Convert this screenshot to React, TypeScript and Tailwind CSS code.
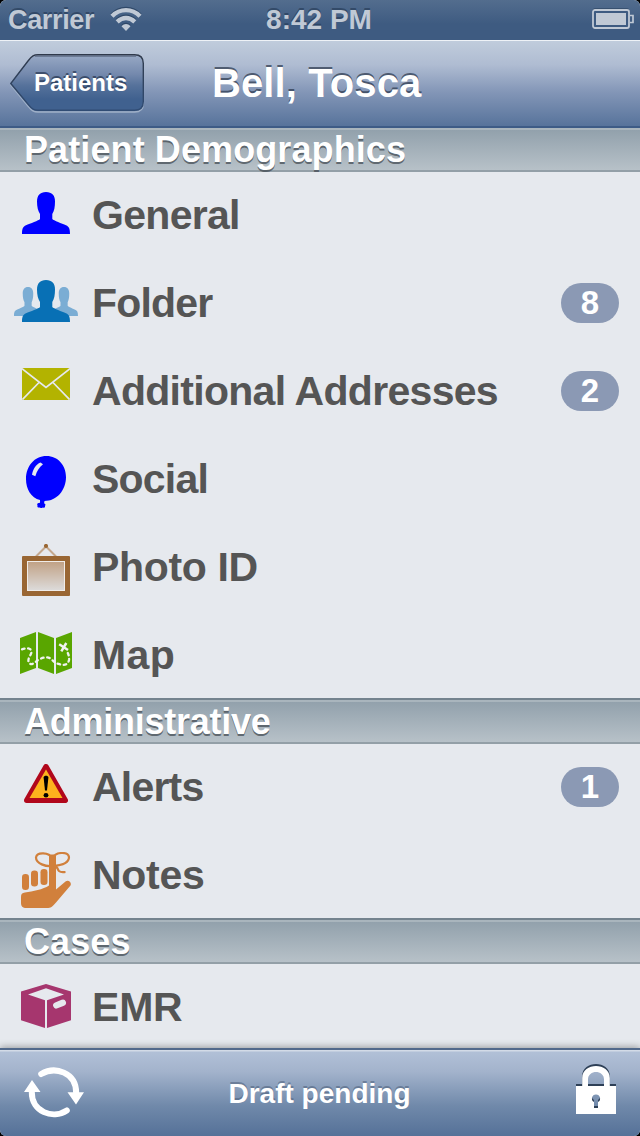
import type { ReactNode } from "react";

const person =
  "M24 0C18 0 15 3.500 15 9.500c0 5.500 1 9.500 3 12.500v5C17 28.500 8 31.500 4 33.300 1 34.700 0 36.500 0 42h48c0-5.500-1-7.300-4-8.700C40 31.500 31.500 28.500 30.300 27v-5C32.200 19 33 15 33 9.500 33 3.500 30 0 24 0z";

function GeneralIcon() {
  return (
    <svg width="48" height="42" viewBox="0 0 48 42" className="ml-[22px] mt-[20px]">
      <path d={person} fill="#0000ff" />
    </svg>
  );
}

function FolderIcon() {
  return (
    <svg width="64" height="42" viewBox="0 0 64 42" className="ml-[14px] mt-[20px]">
      <g fill="#7badd4">
        <path d={person} transform="translate(0 7) scale(.583 .69)" />
        <path d={person} transform="translate(36 7) scale(.583 .69)" />
      </g>
      <path d={person} transform="translate(8 0)" fill="#0870b5" />
    </svg>
  );
}

function MailIcon() {
  return (
    <svg width="48" height="32" viewBox="0 0 48 32" className="ml-[22px] mt-[20px]">
      <rect width="48" height="32" rx="1.500" fill="#b3b300" />
      <path d="M0 .7 24 19.500 48 .7M.5 31.500 17 14.500M47.500 31.500 31 14.500" fill="none" stroke="#e6e9ee" strokeWidth="1.700" />
    </svg>
  );
}

function BalloonIcon() {
  return (
    <svg width="40" height="52" viewBox="0 0 40 52" className="ml-[26px] mt-[20px]">
      <path
        d="M20.500 0C32 0 40 9.500 40 21c0 13-9 24-21.500 24 0 1-.7 1.800-.2 2.500 1.700 1 1.200 1.500.7 2.500.3 1.500-.7 2-2 1.500-1 .7-2.500.7-3.500 0-1.500.3-2.500-.3-2-2-1-2 .5-2.500 2-2.500.8-.5.500-2 .5-3C5 42 0 33 0 23 0 10 8.500 0 20.500 0z"
        fill="#0000ff"
      />
      <path d="M14.500 6.500 17 8.300c-4 3-6 6.700-7.700 12L6 18.800c1-5.500 3.800-10.500 8.500-12.300z" fill="#e6e9ee" />
    </svg>
  );
}

function FrameIcon() {
  return (
    <svg width="48" height="52" viewBox="0 0 48 52" className="ml-[22px] mt-[20px]">
      <defs>
        <linearGradient id="photo" x1="0" y1="0" x2="0" y2="1">
          <stop offset="0" stopColor="#c1a286" />
          <stop offset="1" stopColor="#dcdad9" />
        </linearGradient>
      </defs>
      <path d="M14 12.500 24 2.500l10 10" fill="none" stroke="#c4a88e" strokeWidth="2" />
      <circle cx="24" cy="2" r="2.100" fill="#996633" />
      <rect y="12" width="48" height="40" rx="1" fill="#996633" />
      <rect x="5" y="17" width="38" height="30" fill="#f0ece8" />
      <rect x="6" y="18" width="36" height="28" fill="url(#photo)" />
    </svg>
  );
}

function MapIcon() {
  return (
    <svg width="52" height="42" viewBox="0 0 52 42" className="ml-[20px] mt-[20px]">
      <path d="M0 6 16 0v36L0 42zM18 0l16 6v36l-16-6zM36 6l16-6v36l-16 6z" fill="#59a600" />
      <g fill="none" stroke="#f0f3f0">
        <path
          d="M2 17.300C5 16.200 8.500 15.700 10.500 17.500 13 20.500 10 23 8.900 26 7.500 30 9 32.500 12.300 32 15 31.200 17 28 21 26.500 25 24.700 29.500 25 32 27.700 34.500 31 37 31.500 40 32.300 44 33.500 48 33 49 28 49.400 25 48.500 22 47 19.500"
          strokeWidth="2.300"
          strokeDasharray="2.600 3.600"
          strokeLinecap="round"
        />
        <path d="m39.200 12.200 8.800 5.800M46.300 11l-5 8.300" strokeWidth="2.500" />
      </g>
    </svg>
  );
}

function AlertIcon() {
  return (
    <svg width="44" height="39" viewBox="0 0 44 39" className="ml-[24px] mt-[20px]">
      <path d="M22 2.700 41.300 36.300H2.700z" fill="#b1071b" stroke="#b1071b" strokeWidth="5.400" strokeLinejoin="round" />
      <path d="M22 5.500 38.500 34H5.500z" fill="#fdb31d" />
      <path d="M19.600 13.500c0-2.300 4.800-2.300 4.800 0L23 26.500h-2z" fill="#000" />
      <ellipse cx="22" cy="31.300" rx="2.400" ry="2.300" fill="#000" />
    </svg>
  );
}

function NotesIcon() {
  return (
    <svg width="50" height="56" viewBox="0 0 50 56" className="ml-[21px] mt-[20px]">
      <g fill="#d1803c">
        <rect x="1" y="22" width="7" height="16" rx="3.300" />
        <rect x="10" y="18.500" width="7" height="16" rx="3.300" />
        <rect x="19.500" y="17" width="7" height="16" rx="3.300" />
        <path d="M28 4c0-2 7-2 7 0v33.500L44.500 29.500c3-2 6.500 1 5 4L35 50.500c-4 4.500-5 5.500-9 5.500H5.500C1.500 56 0 54 0 51v-6c0-3 1-4 4-4.500 8-1.200 18-3 24-7z" />
      </g>
      <g fill="none" stroke="#d1803c" strokeWidth="2.200">
        <path d="M31.500 14C25 15 15 11.500 15 5.500 16-.5 28 .5 31.500 6 35-.5 47-.5 48 5c0 6-8.500 8.500-16.500 9" />
        <path d="M33 14.500c4-.5 3 2.500 5 4.500 2 1.800 4 1.200 6.500 1" />
      </g>
    </svg>
  );
}

function BoxIcon() {
  return (
    <svg width="50" height="44" viewBox="0 0 50 44" className="ml-[21px] mt-[20px]">
      <path d="M25 0 50 7.500v28.700L26 44V16.300L43 10.400 25 4.300 7 10.400l17 5.900V44L0 36.200V7.500z" fill="#a6366e" />
      <path d="M35.300 21.400 41.800 18.800" stroke="#e6e9ee" strokeWidth="6.400" strokeLinecap="round" />
    </svg>
  );
}

function Wifi() {
  return (
    <svg width="32" height="25" viewBox="0 0 32 25" className="ml-[16px] mt-[6px] overflow-visible">
      {[
        { dy: -1.3, c: "#2f4868" },
        { dy: 0, c: "#c0c9d5" },
      ].map(({ dy, c }) => (
        <g key={dy} transform={`translate(0 ${dy})`} fill="none" stroke={c} strokeWidth="4.300">
          <path d="M2 10.200C10 2.200 22 2.200 30 10.200" />
          <path d="M7.200 15.900c5.300-5.200 12.300-5.200 17.600 0" />
          <path d="m16 25-4.500-4.700c2.700-3 6.300-3 9 0z" fill={c} stroke="none" />
        </g>
      ))}
    </svg>
  );
}

function Battery() {
  return (
    <svg width="42" height="22" viewBox="0 0 42 22" className="mr-[6px] mt-[8px]">
      <rect x="1" y="0" width="36" height="20" rx="2" fill="#2b425f" opacity=".6" />
      <rect x="1" y="2" width="36" height="18" rx="2" fill="#3e5b81" stroke="#c0c9d5" strokeWidth="1.800" />
      <path d="M38 7.500h3v7h-3" fill="none" stroke="#c0c9d5" strokeWidth="1.700" />
      <rect x="4" y="5" width="30" height="12" fill="#c0c9d5" />
    </svg>
  );
}

function SyncIcon() {
  return (
    <svg width="60" height="51" viewBox="0 0 60 51" className="mb-[2px] ml-[24px]">
      <g fill="none" stroke="#fff" strokeWidth="6" strokeLinecap="round">
        <path d="M17.200 7C31-1 52.200 5 52.200 26" />
        <path d="M42.800 43.500C29 52.500 7.500 45 7.800 25" />
      </g>
      <path d="M43.500 25.200H60l-8 12.300zM0 25 8 13l8.500 12z" fill="#fff" />
    </svg>
  );
}

function LockIcon() {
  const shape =
    "M0 22h6.200v-8C6.200-2 33.800-2 33.800 14v8H40v28H0zM12 22h16v-6.500c0-10-16-10-16 0zM20 30.500a4 4 0 0 0-2 7.500v6h4v-6a4 4 0 0 0-2-7.500z";
  return (
    <svg width="40" height="52" viewBox="0 -2 40 52" className="mr-[24px]">
      <path d={shape} fill="#2e4057" fillRule="evenodd" transform="translate(0 -2)" />
      <path d={shape} fill="#fff" fillRule="evenodd" />
    </svg>
  );
}

function BackButton() {
  return (
    <button className="relative ml-[10px] flex h-[60px] w-[135px] items-center pl-[24px]">
      <svg width="135" height="60" viewBox="0 0 135 60" className="absolute left-0 top-0">
        <defs>
          <linearGradient id="back" x1="0" y1="0" x2="0" y2="1">
            <stop offset="0" stopColor="#98a9c5" />
            <stop offset=".35" stopColor="#7489ad" />
            <stop offset=".55" stopColor="#56729b" />
            <stop offset=".8" stopColor="#40618f" />
            <stop offset="1" stopColor="#40618f" />
          </linearGradient>
          <linearGradient id="edge" x1="0" y1="0" x2="0" y2="1">
            <stop offset="0" stopColor="#303a4b" />
            <stop offset="1" stopColor="#304c74" />
          </linearGradient>
        </defs>
        <path d="M.8 31 18 8.500C22 3 24 2.500 28 2.500h96.500c6 0 8.800 3 8.800 8.500v38.500c0 6-3 8.500-8.800 8.500H28c-4 0-6-1-10-6z" fill="none" stroke="#9fb0c8" strokeWidth="1.500" />
        <path d="M.8 29.500 18 7C22 1.800 24 .8 28 .8h96.500c6 0 8.800 3 8.800 8.700v38c0 6-3 8.800-8.800 8.800H28c-4 0-6-1-10-6z" fill="url(#back)" stroke="url(#edge)" strokeWidth="1.400" />
        <path d="M25 2.300h101" stroke="#5b6880" strokeOpacity=".7" strokeWidth="1.500" />
      </svg>
      <span className="relative -mt-[2px] text-[24px] leading-none text-white [text-shadow:0_-2px_0_rgba(25,40,65,.6)]">Patients</span>
    </button>
  );
}

function SectionHeader({ title, tracking = "tracking-[0.1px]" }: { title: string; tracking?: string }) {
  return (
    <h2
      className={`relative -mt-[2px] flex h-[46px] shrink-0 items-center border-y-2 border-t-[#74838e] border-b-[#939fa7] bg-[linear-gradient(to_bottom,#a9b5bd_0,#a9b5bd_2px,#92a1ac_2px,#b7c1c8_100%)] pl-[24px] pt-[1px] text-[36px] leading-none text-white [text-shadow:0_2px_0_rgba(60,68,76,.7)] ${tracking}`}
    >
      {title}
    </h2>
  );
}

type RowProps = { icon: ReactNode; label: string; count?: number; tracking?: string };

function Row({ icon, label, count, tracking = "tracking-[-0.7px]" }: RowProps) {
  return (
    <li className="flex h-[88px] shrink-0 pb-[2px]">
      <div className="w-[92px] shrink-0">{icon}</div>
      <span className={`flex-1 self-center whitespace-nowrap text-[41px] leading-none text-[#555555] ${tracking}`}>{label}</span>
      {count !== undefined && (
        <span className="mr-[21px] flex h-[40px] w-[58px] items-center justify-center self-center rounded-full bg-[#8b99b4] pb-[1px] text-[33px] leading-none text-white">
          {count}
        </span>
      )}
    </li>
  );
}

export default function App() {
  return (
    <div className="h-[1136px] w-[640px] bg-black font-['Liberation_Sans',Arial,sans-serif] font-bold">
      <div className="flex h-full flex-col overflow-hidden rounded-[6px] bg-[#e6e9ee]">
        <div className="grid h-[40px] shrink-0 grid-cols-3 bg-[linear-gradient(to_bottom,#536d8e_0,#3e5b81_60%,#3e5b81_100%)] text-[28px] leading-[40px] text-[#c0c9d5] [text-shadow:0_-2px_0_rgba(35,55,82,.6)]">
          <div className="flex pl-[8px]">
            <span className="text-[27px] tracking-[-0.35px]">Carrier</span>
            <Wifi />
          </div>
          <div className="whitespace-nowrap pr-[2px] text-center">8:42 PM</div>
          <div className="flex justify-end">
            <Battery />
          </div>
        </div>

        <header className="relative z-10 grid h-[88px] shrink-0 grid-cols-[212px_1fr] border-b-2 border-t border-b-[#3d5b86] border-t-[#eef2f7] bg-[linear-gradient(to_bottom,#c0ccdc_0,#afbcd2_28%,#8396b7_60%,#57739b_100%)]">
          <div className="pt-[13px]">
            <BackButton />
          </div>
          <h1 className="pt-[22px] text-[40px] leading-[40px] tracking-[0.1px] text-white [text-shadow:0_-2px_0_rgba(40,52,72,.7)]">Bell, Tosca</h1>
        </header>

        <main className="flex min-h-0 flex-1 flex-col overflow-hidden">
          <SectionHeader title="Patient Demographics" />
          <ul>
            <Row icon={<GeneralIcon />} label="General" />
            <Row icon={<FolderIcon />} label="Folder" count={8} tracking="tracking-[-0.8px]" />
            <Row icon={<MailIcon />} label="Additional Addresses" count={2} />
            <Row icon={<BalloonIcon />} label="Social" tracking="tracking-[-0.8px]" />
            <Row icon={<FrameIcon />} label="Photo ID" tracking="tracking-[-0.35px]" />
            <Row icon={<MapIcon />} label="Map" tracking="tracking-[0.4px]" />
          </ul>
          <SectionHeader title="Administrative" tracking="tracking-[-0.25px]" />
          <ul>
            <Row icon={<AlertIcon />} label="Alerts" count={1} tracking="tracking-[-0.8px]" />
            <Row icon={<NotesIcon />} label="Notes" tracking="tracking-[-0.3px]" />
          </ul>
          <SectionHeader title="Cases" />
          <ul>
            <Row icon={<BoxIcon />} label="EMR" tracking="tracking-[-0.2px]" />
          </ul>
        </main>

        <footer className="relative grid h-[88px] shrink-0 grid-cols-[1fr_auto_1fr] items-center border-t-2 border-t-[#52698b] bg-[linear-gradient(to_bottom,#d3dbe7_0,#d3dbe7_1px,#b1c0d7_2px,#a3b3cc_25%,#7089aa_65%,#557198_100%)] shadow-[0_-1px_7px_rgba(0,0,0,.35)]">
          <SyncIcon />
          <span className="pr-[1px] pt-[2px] text-[28px] leading-none text-white [text-shadow:0_-2px_0_rgba(70,88,115,.5)]">Draft pending</span>
          <div className="flex justify-end pb-[10px]">
            <LockIcon />
          </div>
        </footer>
      </div>
    </div>
  );
}
